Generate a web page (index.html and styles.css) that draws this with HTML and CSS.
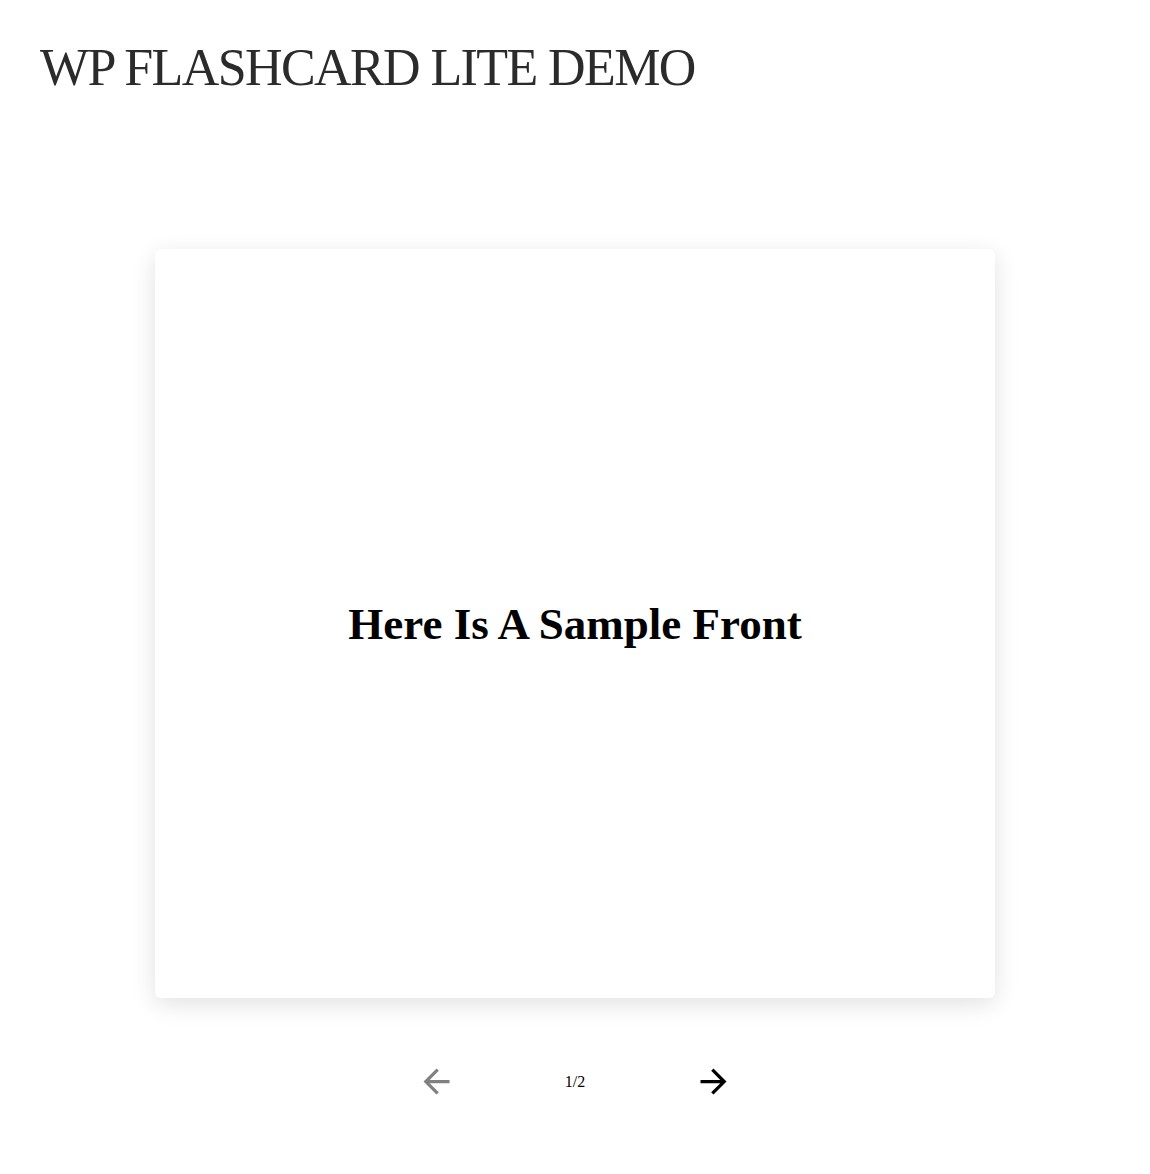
FILE: index.html
```html
<!DOCTYPE html>
<html>
<head>
<meta charset="utf-8">
<link rel="stylesheet" href="styles.css">
</head>
<body>
<header class="site-header">
  <h1 class="site-title">WP FLASHCARD LITE DEMO</h1>
</header>
<main class="deck">
  <div class="card">
    <h2 class="card-text">Here Is A Sample Front</h2>
  </div>
  <nav class="pager">
    <button class="nav-btn prev" aria-label="Previous">
      <svg width="39" height="39" viewBox="0 0 24 24"><path d="M20 11H7.83l5.59-5.59L12 4l-8 8 8 8 1.41-1.41L7.83 13H20v-2z" fill="currentColor"/></svg>
    </button>
    <span class="count">1/2</span>
    <button class="nav-btn next" aria-label="Next">
      <svg width="39" height="39" viewBox="0 0 24 24"><path d="M4 11h12.17l-5.59-5.59L12 4l8 8-8 8-1.41-1.41L16.17 13H4v-2z" fill="currentColor"/></svg>
    </button>
  </nav>
</main>
</body>
</html>
```

FILE: styles.css
```css
html, body { margin: 0; padding: 0; background: #fff; }
body { font-family: "Liberation Serif", "Times New Roman", serif; }
.site-header { padding: 38px 40px 0; }
.site-title {
  margin: 0;
  font-weight: 400;
  font-size: 52px;
  line-height: 60px;
  color: #2b2b2b;
  letter-spacing: -1.6px;
}
.deck {
  display: flex;
  flex-direction: column;
  align-items: center;
  padding-top: 151px;
}
.card {
  width: 840px;
  height: 749px;
  background: #fff;
  border-radius: 6px;
  box-shadow: 0 6px 24px rgba(0,0,0,0.12);
  display: flex;
  align-items: center;
  justify-content: center;
}
.card-text {
  margin: 0;
  font-size: 45px;
  font-weight: 700;
  color: #000;
}
.pager {
  display: flex;
  align-items: center;
  justify-content: center;
  gap: 109px;
  margin-top: 64px;
}
.nav-btn {
  background: none;
  border: 0;
  padding: 0;
  display: flex;
  cursor: pointer;
}
.prev { color: #808080; }
.next { color: #000; }
.count { font-size: 16px; color: #000; }
```
